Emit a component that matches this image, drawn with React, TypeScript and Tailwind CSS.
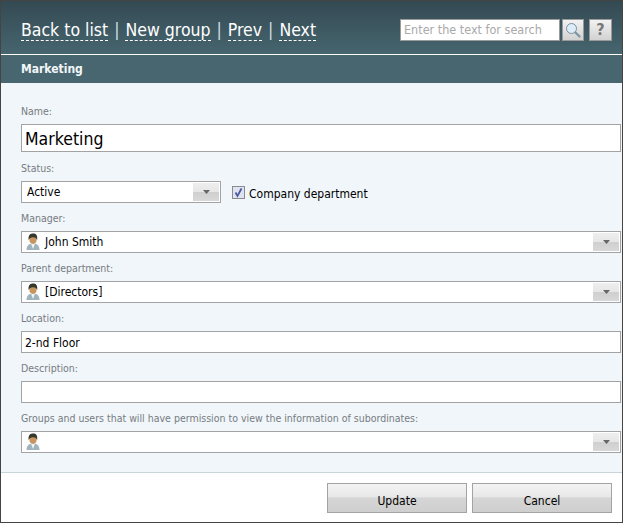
const font = { fontFamily: '"DejaVu Sans", sans-serif' }

function Label({ text }: { text: string }) {
  return <div className="h-[15px] text-[10.5px] leading-[15px] text-[#777c82]">{text}</div>
}

function UserIcon() {
  return (
    <svg width="14" height="18" viewBox="0 0 14 18" className="shrink-0">
      <path d="M0.5 17 C0.5 12.5 3 10.5 7 10.5 C11 10.5 13.5 12.5 13.5 17 Z" fill="#9fb4bd" />
      <path d="M5 10.5 L7 16 L9 10.5 Z" fill="#f4f6f6" />
      <ellipse cx="7" cy="6.5" rx="3.6" ry="4.4" fill="#c8945f" />
      <path d="M2.6 7 C2 1.5 4.6 0.5 7.2 0.5 C10 0.5 11.8 2 11.2 7 C10.4 4.6 8.4 4 6.6 4.2 C5 4.4 3.6 5 2.6 7 Z" fill="#34382f" />
    </svg>
  )
}

function Arrow() {
  return (
    <div className="flex h-[18px] w-[26px] shrink-0 items-center justify-center bg-[linear-gradient(#eeeeee_0%,#e6e6e6_50%,#cfcfcf_50%,#d8d8d8_100%)]">
      <svg width="7" height="4" viewBox="0 0 7 4">
        <path d="M0 0 H7 L3.5 4 Z" fill="#666666" />
      </svg>
    </div>
  )
}

function Combo({ value }: { value: string }) {
  return (
    <div className="flex h-[22px] items-center border border-[#a3a3a3] bg-white pr-px">
      <div className="ml-[4px] mr-[5px]"><UserIcon /></div>
      <div className="flex-1 text-[12px] text-black">{value}</div>
      <Arrow />
    </div>
  )
}

function TextBox({ value }: { value: string }) {
  return (
    <div className="flex h-[22px] items-center border border-[#a3a3a3] bg-white px-[3px] pt-px text-[12px] text-black">
      {value}
    </div>
  )
}

function HeaderLink({ text }: { text: string }) {
  return <span className="border-b border-dashed border-white leading-[20px]">{text}</span>
}

export default function App() {
  return (
    <div style={font} className="flex h-[523px] w-[623px] flex-col border border-[#444444] bg-white [font-stretch:condensed]">
      <div className="flex h-[53px] items-center justify-between bg-[linear-gradient(#344a53,#46656f)] pl-[20px] pr-[10px] pt-[5px]">
        <div className="flex items-center gap-[6px] text-[17.5px] text-white">
          <HeaderLink text="Back to list" />
          <span className="text-[#cfdde2]">|</span>
          <HeaderLink text="New group" />
          <span className="text-[#cfdde2]">|</span>
          <HeaderLink text="Prev" />
          <span className="text-[#cfdde2]">|</span>
          <HeaderLink text="Next" />
        </div>
        <div className="flex items-center">
          <div className="flex h-[22px] w-[160px] items-center border border-[#9a9a9a] bg-white px-[3px] text-[12.5px] text-[#a9a9a9]">
            Enter the text for search
          </div>
          <div className="ml-[2px] flex h-[22px] w-[22px] items-center justify-center border border-[#9a9a9a] bg-[linear-gradient(#f2f2f2,#d2d2d2)]">
            <svg width="16" height="16" viewBox="0 0 16 16">
              <path d="M9.5 9.5 L14.5 14.5" stroke="#7f98a3" strokeWidth="2.4" strokeLinecap="round" />
              <circle cx="6.5" cy="6.5" r="5" fill="#dcecf8" stroke="#7c8f9b" strokeWidth="1" />
            </svg>
          </div>
          <div className="ml-[5px] flex h-[22px] w-[23px] items-center justify-center border border-[#9a9a9a] bg-[linear-gradient(#f2f2f2,#d2d2d2)] text-[16px] font-bold text-[#777777]">
            ?
          </div>
        </div>
      </div>
      <div className="h-px bg-white" />
      <div className="flex h-[28px] items-center bg-[#48666f] pl-[20px] text-[12px] font-bold text-[#f2f6f8]">
        Marketing
      </div>
      <div className="flex h-[390px] flex-col border-b border-[#c8d6dc] bg-[#f0f6fa] pl-[20px] pr-px pt-[21px]">
        <Label text="Name:" />
        <div className="mt-[5px] flex h-[28px] items-center border border-[#a3a3a3] bg-white px-[3px] pt-[2px] text-[17.5px] text-black">
          Marketing
        </div>
        <div className="mt-[9px]"><Label text="Status:" /></div>
        <div className="mt-[5px] flex h-[22px] items-center">
          <div className="flex h-[22px] w-[200px] items-center border border-[#a3a3a3] bg-white pl-[5px] pr-px text-[12px] text-black">
            <div className="flex-1">Active</div>
            <Arrow />
          </div>
          <div className="ml-[11px] flex h-[13px] w-[13px] items-center justify-center border border-[#8a8a92] bg-[#dfe3ee]">
            <svg width="11" height="11" viewBox="0 0 11 11">
              <path d="M2.5 5.5 L4.5 9 L8.5 1.5" stroke="#4a5aa8" strokeWidth="1.8" fill="none" />
            </svg>
          </div>
          <span className="ml-[4px] mt-[3px] text-[12px] text-black">Company department</span>
        </div>
        <div className="mt-[8px]"><Label text="Manager:" /></div>
        <div className="mt-[5px]"><Combo value="John Smith" /></div>
        <div className="mt-[8px]"><Label text="Parent department:" /></div>
        <div className="mt-[5px]"><Combo value="[Directors]" /></div>
        <div className="mt-[8px]"><Label text="Location:" /></div>
        <div className="mt-[5px]"><TextBox value="2-nd Floor" /></div>
        <div className="mt-[8px]"><Label text="Description:" /></div>
        <div className="mt-[5px]"><TextBox value="" /></div>
        <div className="mt-[8px]"><Label text="Groups and users that will have permission to view the information of subordinates:" /></div>
        <div className="mt-[5px]"><Combo value="" /></div>
      </div>
      <div className="flex flex-1 items-start justify-end gap-[5px] pr-[10px] pt-[10px]">
        <button className="h-[30px] w-[140px] border border-[#a3a3a3] bg-[linear-gradient(#f4f4f4_0%,#e8e8e8_45%,#d6d6d6_50%,#cfcfcf_100%)] pt-[5px] text-[12px] text-black">
          Update
        </button>
        <button className="h-[30px] w-[140px] border border-[#a3a3a3] bg-[linear-gradient(#f4f4f4_0%,#e8e8e8_45%,#d6d6d6_50%,#cfcfcf_100%)] pt-[5px] text-[12px] text-black">
          Cancel
        </button>
      </div>
    </div>
  )
}
